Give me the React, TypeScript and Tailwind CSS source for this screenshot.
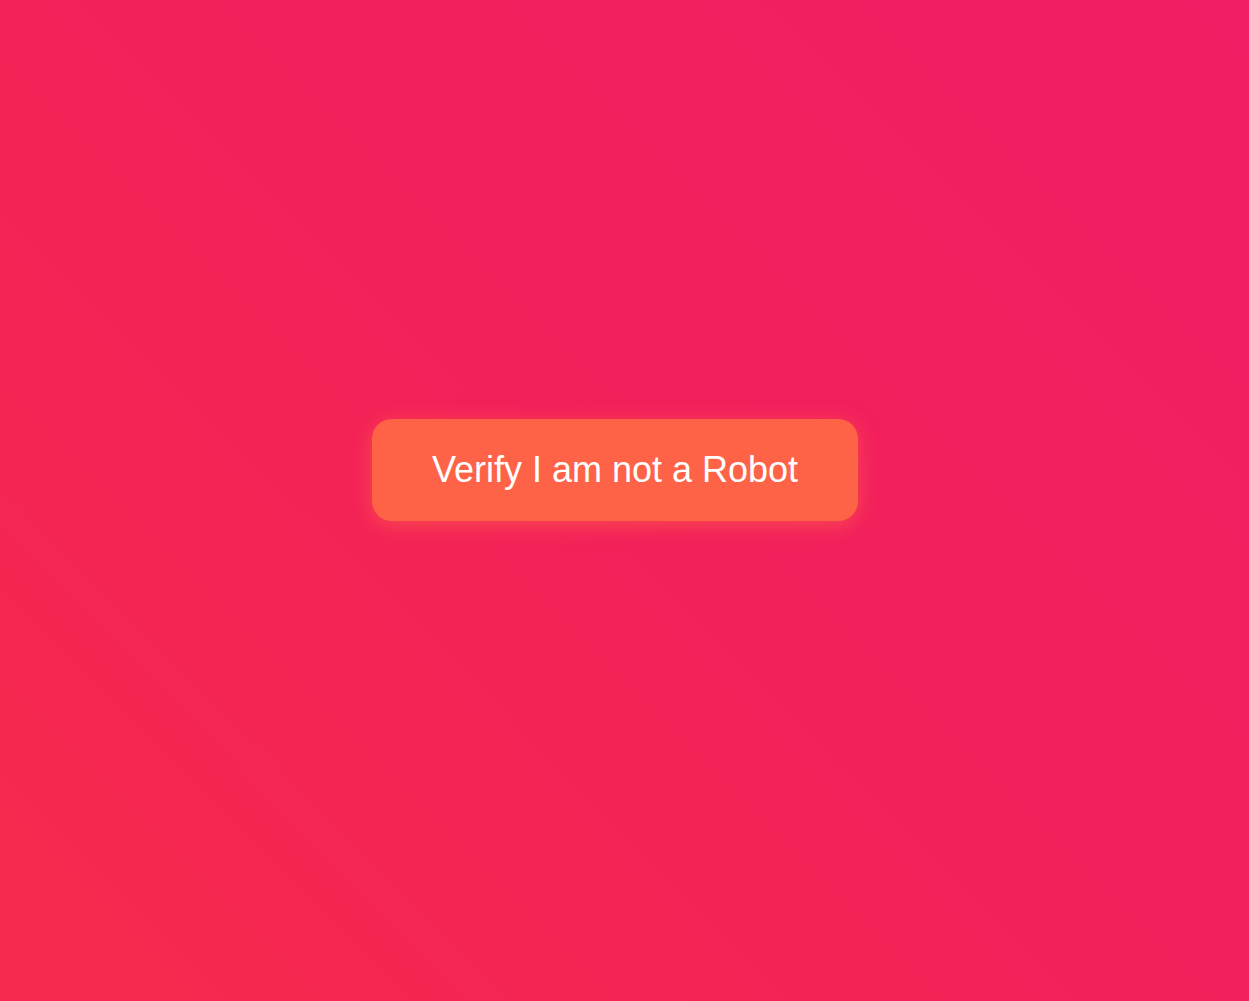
export default function App() {
  return (
    <div className="flex h-screen w-full items-center justify-center bg-[linear-gradient(45deg,#f62a4c_0%,#f3215a_50%,#f21c64_100%)]">
      <button
        className="mb-[61px] mr-[19px] rounded-[20px] bg-[#ff6347] px-[60px] py-[30px] text-[36px] leading-[42px] text-white shadow-[0_4px_20px_rgba(255,99,71,0.6)]"
        style={{ fontFamily: '"Liberation Sans", Arial, sans-serif' }}
      >
        Verify I am not a Robot
      </button>
    </div>
  );
}
